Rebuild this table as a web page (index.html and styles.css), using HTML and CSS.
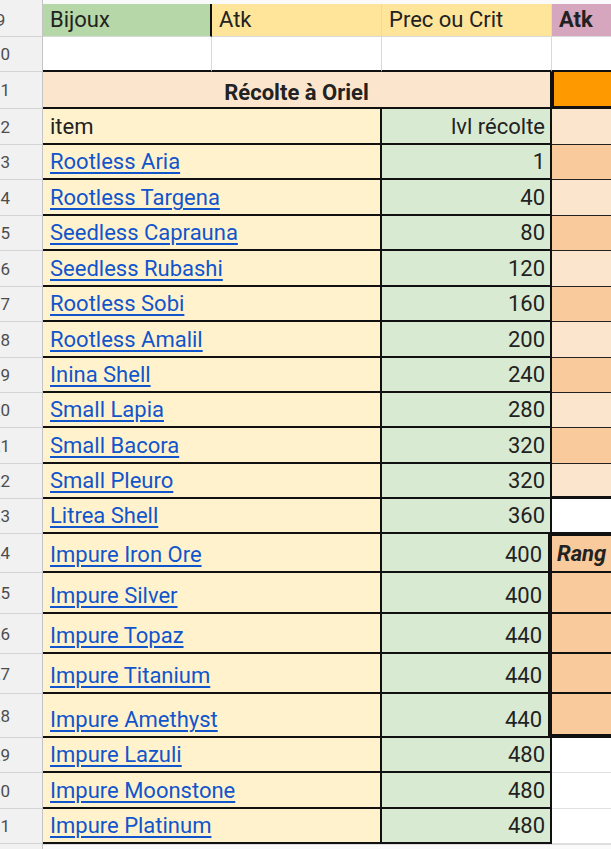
FILE: index.html
```html
<!DOCTYPE html>
<html lang="fr">
<head>
<meta charset="utf-8">
<title>Récolte à Oriel</title>
<link rel="stylesheet" href="styles.css">
</head>
<body>
<div class="sheet">
  <div class="rh top"></div><div class="c topstrip"></div>

  <div class="rh">9</div>
  <div class="c hd green sepR">Bijoux</div>
  <div class="c hd yellow grayR">Atk</div>
  <div class="c hd yellow grayR">Prec ou Crit</div>
  <div class="c hd purple bold">Atk</div>

  <div class="rh">10</div>
  <div class="c blank grayR"></div>
  <div class="c blank grayR"></div>
  <div class="c blank grayR"></div>
  <div class="c blank"></div>

  <div class="rh">11</div>
  <div class="c title">Récolte à Oriel</div>
  <div class="c d orange"></div>

  <div class="rh">12</div>
  <div class="c item">item</div>
  <div class="c lvl">lvl récolte</div>
  <div class="c d light"></div>

  <div class="rh">13</div>
  <div class="c item"><a href="#">Rootless Aria</a></div>
  <div class="c lvl">1</div>
  <div class="c d dark"></div>

  <div class="rh">14</div>
  <div class="c item"><a href="#">Rootless Targena</a></div>
  <div class="c lvl">40</div>
  <div class="c d light"></div>

  <div class="rh">15</div>
  <div class="c item"><a href="#">Seedless Caprauna</a></div>
  <div class="c lvl">80</div>
  <div class="c d dark"></div>

  <div class="rh">16</div>
  <div class="c item"><a href="#">Seedless Rubashi</a></div>
  <div class="c lvl">120</div>
  <div class="c d light"></div>

  <div class="rh">17</div>
  <div class="c item"><a href="#">Rootless Sobi</a></div>
  <div class="c lvl">160</div>
  <div class="c d dark"></div>

  <div class="rh">18</div>
  <div class="c item"><a href="#">Rootless Amalil</a></div>
  <div class="c lvl">200</div>
  <div class="c d light"></div>

  <div class="rh">19</div>
  <div class="c item"><a href="#">Inina Shell</a></div>
  <div class="c lvl">240</div>
  <div class="c d dark"></div>

  <div class="rh">20</div>
  <div class="c item"><a href="#">Small Lapia</a></div>
  <div class="c lvl">280</div>
  <div class="c d light"></div>

  <div class="rh">21</div>
  <div class="c item"><a href="#">Small Bacora</a></div>
  <div class="c lvl">320</div>
  <div class="c d dark"></div>

  <div class="rh">22</div>
  <div class="c item"><a href="#">Small Pleuro</a></div>
  <div class="c lvl">320</div>
  <div class="c d light last"></div>

  <div class="rh">23</div>
  <div class="c item"><a href="#">Litrea Shell</a></div>
  <div class="c lvl">360</div>
  <div class="c d white"></div>

  <div class="rh">24</div>
  <div class="c item"><a href="#">Impure Iron Ore</a></div>
  <div class="c lvl inblock">400</div>
  <div class="c d rang first">Rang</div>

  <div class="rh">25</div>
  <div class="c item"><a href="#">Impure Silver</a></div>
  <div class="c lvl inblock">400</div>
  <div class="c d rang"></div>

  <div class="rh">26</div>
  <div class="c item"><a href="#">Impure Topaz</a></div>
  <div class="c lvl inblock">440</div>
  <div class="c d rang"></div>

  <div class="rh">27</div>
  <div class="c item"><a href="#">Impure Titanium</a></div>
  <div class="c lvl inblock">440</div>
  <div class="c d rang"></div>

  <div class="rh">28</div>
  <div class="c item"><a href="#">Impure Amethyst</a></div>
  <div class="c lvl inblock">440</div>
  <div class="c d rang end"></div>

  <div class="rh">29</div>
  <div class="c item"><a href="#">Impure Lazuli</a></div>
  <div class="c lvl">480</div>
  <div class="c d empty"></div>

  <div class="rh">30</div>
  <div class="c item"><a href="#">Impure Moonstone</a></div>
  <div class="c lvl">480</div>
  <div class="c d empty"></div>

  <div class="rh">31</div>
  <div class="c item"><a href="#">Impure Platinum</a></div>
  <div class="c lvl">480</div>
  <div class="c d empty"></div>

  <div class="rh bottom"></div><div class="c bottomstrip"></div>
</div>
</body>
</html>
```

FILE: styles.css
```css
html, body {
  margin: 0;
  padding: 0;
  background: #ffffff;
  overflow: hidden;
}

body {
  font-family: Roboto, "Liberation Sans", Arial, sans-serif;
}

.sheet {
  display: grid;
  width: 652px;
  margin-left: -41px;
  grid-template-columns: 84px 169px 170px 170px 59px;
  grid-template-rows:
    4px 33px 35px 37px 36px
    35px 36px 35px 36px 35px 36px 35px 35px 36px 35px 35px
    39px 41px 40px 40px 44px
    35px 36px 35px 5px;
}

/* row header */
.rh {
  box-sizing: border-box;
  display: flex;
  align-items: center;
  justify-content: center;
  background: #f1f1f1;
  border-bottom: 1px solid #d4d4d4;
  border-right: 1px solid #c4c4c4;
  color: #4d4d4d;
  font-size: 17px;
}

.rh.top,
.rh.bottom {
  border-bottom: none;
}

.topstrip {
  grid-column: 2 / 6;
  background: #fafafa;
  border-bottom: 1px solid #dcdcdc;
}

.bottomstrip {
  grid-column: 2 / 6;
  background: #fafafa;
  border-top: 1px solid #dcdcdc;
}

/* cells */
.c {
  box-sizing: border-box;
  display: flex;
  align-items: flex-end;
  padding: 0 7px 4px;
  font-size: 22px;
  line-height: 25px;
  color: #222222;
  white-space: nowrap;
  overflow: hidden;
  min-width: 0;
}

.c a {
  color: #1155cc;
  text-decoration: underline;
  text-decoration-thickness: 1.5px;
  text-underline-offset: 3px;
}

.hd {
  border-bottom: 1px solid #d9d9d9;
  padding-bottom: 4px;
}

.green { background: #b6d7a8; }
.yellow { background: #ffe599; }
.purple { background: #d5a6bd; }
.bold { font-weight: 700; }

.sepR { border-right: 2px solid #111111; }
.grayR { border-right: 1px solid #d9d9d9; }

.blank {
  background: #ffffff;
  border-bottom: 2px solid #111111;
}

.title {
  grid-column: 2 / 5;
  justify-content: center;
  font-weight: 700;
  background: #fce5cd;
  border-bottom: 2px solid #111111;
  border-right: 2px solid #111111;
  padding-bottom: 2px;
}

.item {
  grid-column: 2 / 4;
  background: #fff2cc;
  border-bottom: 2px solid #111111;
  border-right: 2px solid #111111;
}

.lvl {
  justify-content: flex-end;
  padding-right: 5px;
  background: #d9ead3;
  border-bottom: 2px solid #111111;
  border-right: 2px solid #111111;
}

.lvl.inblock {
  border-right: none;
  padding-right: 10px;
}

/* column D */
.d {
  padding-left: 5px;
  border-bottom: 1px solid #222222;
}

.orange {
  background: #ff9900;
  margin-left: -1px;
  border-left: 3px solid #111111;
  border-bottom: 3px solid #111111;
}

.light { background: #fce5cd; }
.dark { background: #f9cb9c; }

.d.last {
  border-bottom: 3px solid #111111;
}

.d.white {
  background: #ffffff;
  border-bottom: none;
}

.rang {
  background: #f9cb9c;
  margin-left: -4px;
  border-left: 4px solid #111111;
  border-bottom: 2px solid #111111;
  font-weight: 700;
  font-style: italic;
  padding-bottom: 5px;
}

.rang.first {
  margin-top: -2px;
  border-top: 4px solid #111111;
}

.rang.end {
  border-bottom: 4px solid #111111;
}

.d.empty {
  background: #ffffff;
  border-bottom: 1px solid #e0e0e0;
}
```
